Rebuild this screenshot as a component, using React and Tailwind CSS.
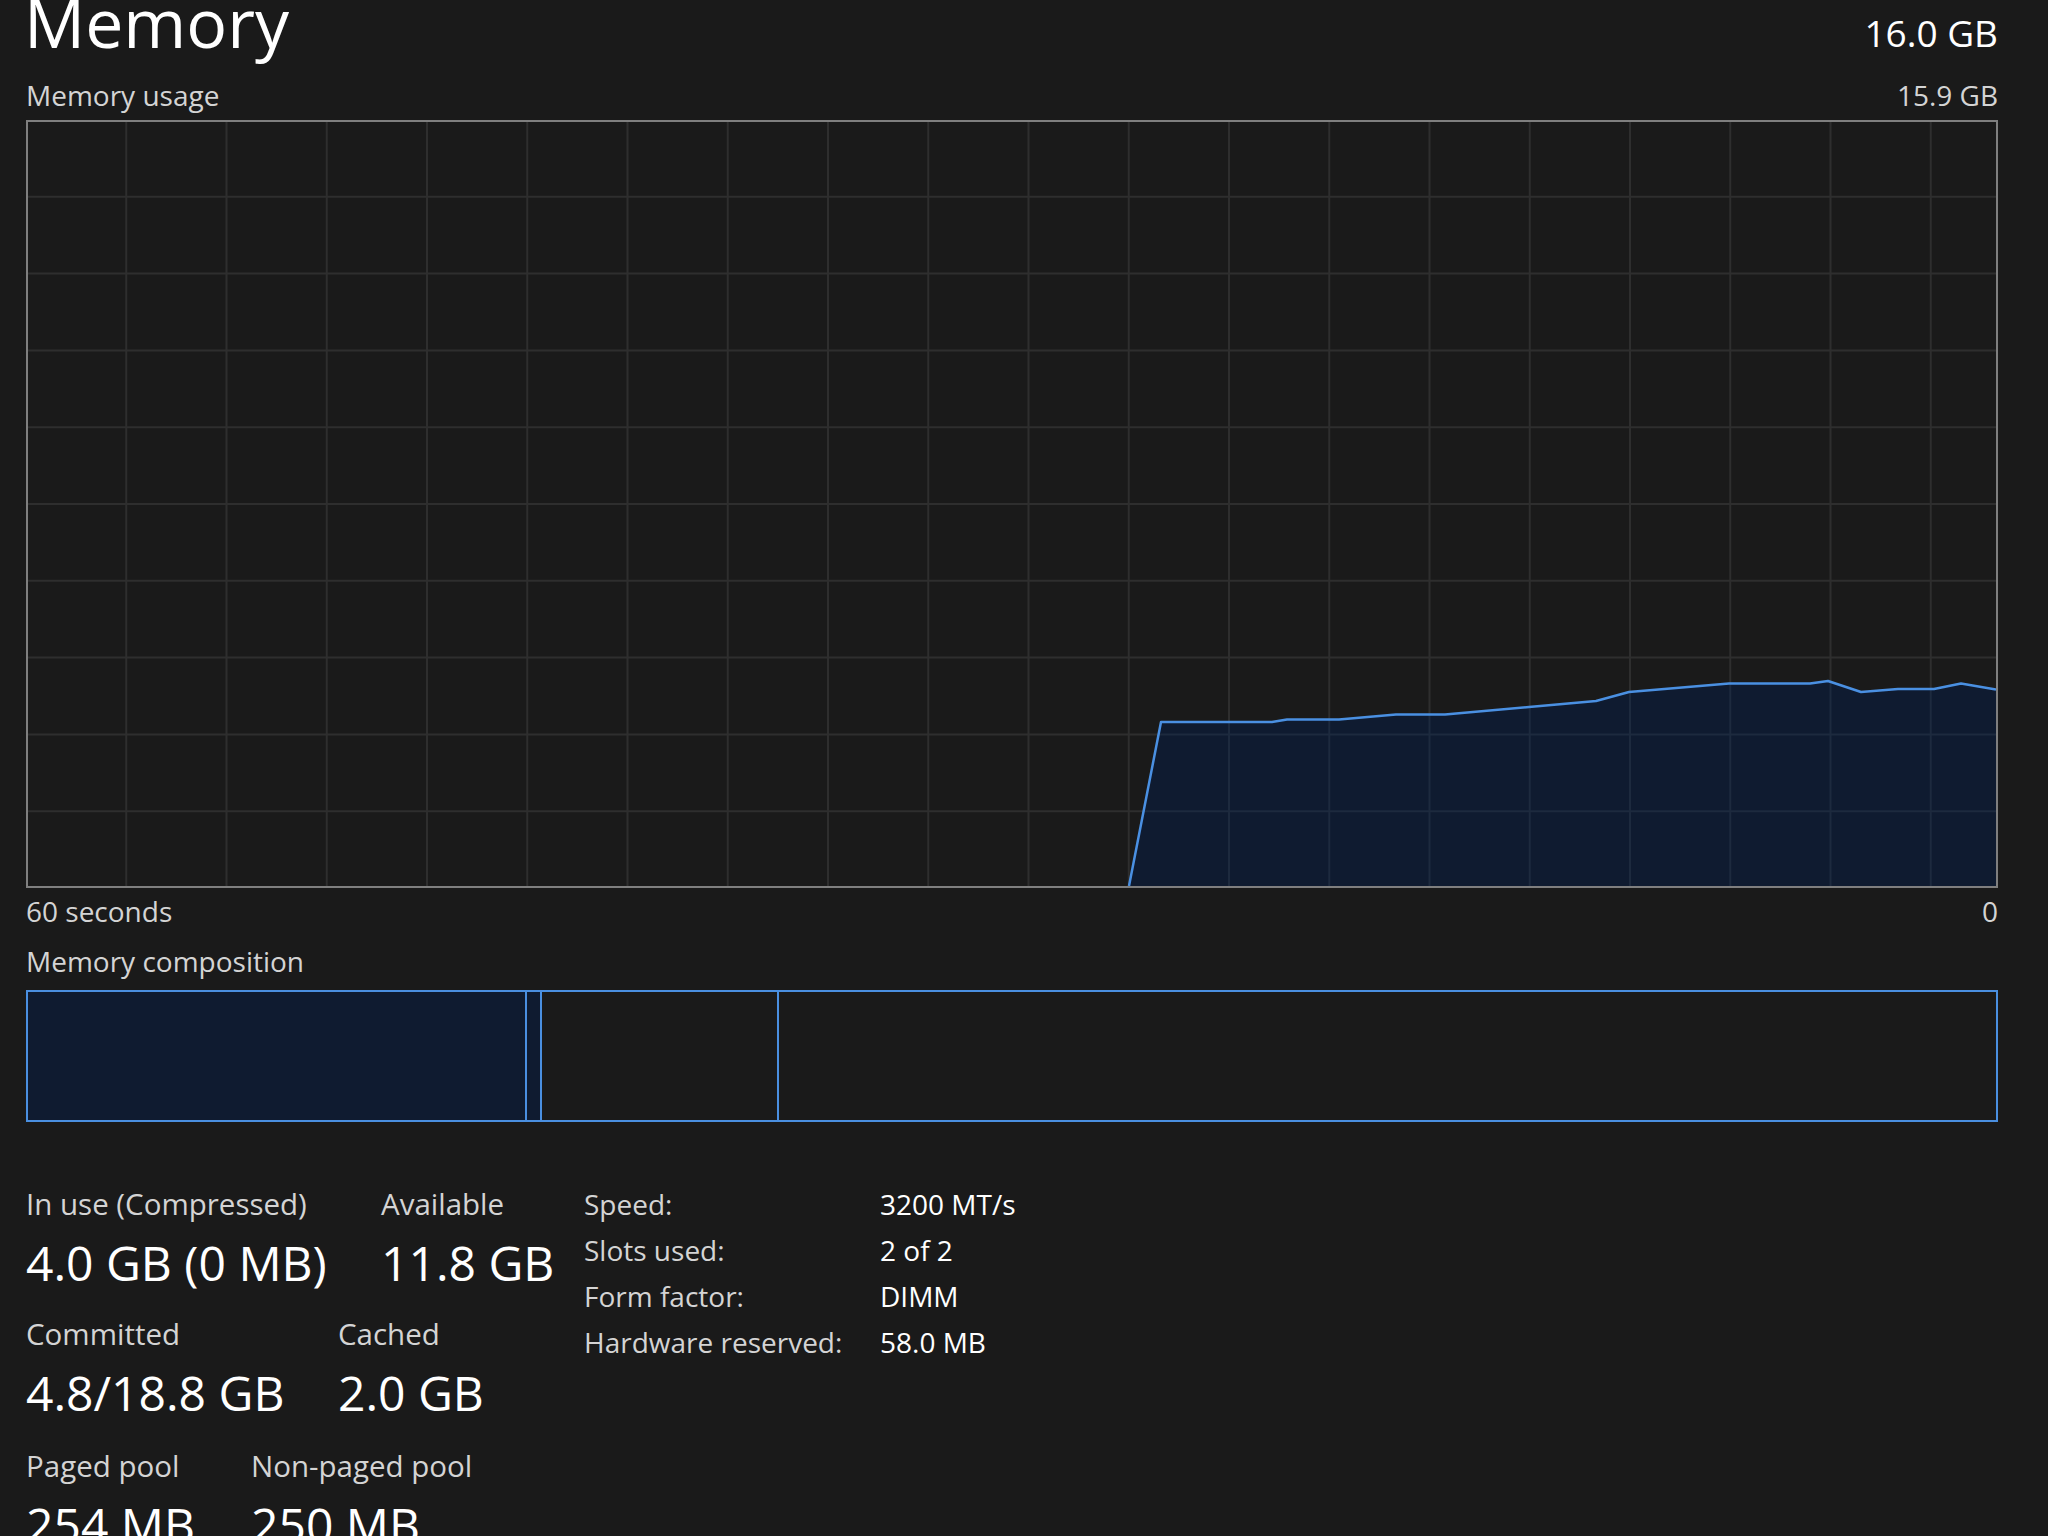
import React from "react";

const W = 1968;
const H = 764;
const pts = [
  [1101, 764], [1133, 600], [1244, 600], [1259, 597.5], [1311, 597.5],
  [1368, 592.5], [1417, 592.5], [1501, 585], [1568, 579], [1601, 570],
  [1701, 561.5], [1782, 561.5], [1800, 559], [1833, 570], [1870, 567],
  [1906, 567], [1933, 561.5], [1968, 567.5],
];

function Graph() {
  const vLines = [];
  for (let k = 1; k <= 19; k++) vLines.push(100.25 * k - 2);
  const hLines = [];
  for (let k = 1; k <= 9; k++) hLines.push(76.8 * k - 2);
  const line = pts.map((p) => p.join(",")).join(" ");
  const poly = line + ` ${W},${H} 1101,${H}`;
  const grid = (color) => (
    <g stroke={color} strokeWidth="2">
      {vLines.map((x) => (
        <line key={"v" + x} x1={x} y1={0} x2={x} y2={H} />
      ))}
      {hLines.map((y) => (
        <line key={"h" + y} x1={0} y1={y} x2={W} y2={y} />
      ))}
    </g>
  );
  return (
    <svg width={W} height={H} className="block">
      <defs>
        <clipPath id="fillclip">
          <polygon points={poly} />
        </clipPath>
      </defs>
      {grid("#2e2e2e")}
      <polygon points={poly} fill="#0f1b30" />
      <g clipPath="url(#fillclip)">{grid("#1d2a3e")}</g>
      <polyline points={line} fill="none" stroke="#4a90e2" strokeWidth="2.5" strokeLinejoin="round" />
    </svg>
  );
}

function Stat({ label, value }) {
  return (
    <div className="flex flex-col">
      <div className="text-[29.5px] leading-[28px] text-[#d4d4d4] whitespace-nowrap">{label}</div>
      <div className="mt-[21px] text-[48px] leading-[48px] text-white whitespace-nowrap">{value}</div>
    </div>
  );
}

export default function App() {
  return (
    <div className="w-[2048px] h-[1536px] overflow-hidden bg-[#1a1a1a] font-['Open_Sans',sans-serif] text-white pl-[26px] pr-[50px]">
      <div className="flex h-[43px] items-start justify-between">
        <div className="text-[68px] leading-[43px] text-white -ml-[2px]">Memory</div>
        <div className="text-[37px] leading-[66px] text-white">16.0 GB</div>
      </div>
      <div className="mt-[38px] flex justify-between text-[28px] leading-[28px] text-[#d4d4d4]">
        <span>Memory usage</span>
        <span>15.9 GB</span>
      </div>
      <div className="mt-[11px] h-[768px] border-2 border-[#7f7f7f]">
        <Graph />
      </div>
      <div className="mt-[9px] flex justify-between text-[28px] leading-[28px] text-[#d4d4d4]">
        <span>60 seconds</span>
        <span>0</span>
      </div>
      <div className="mt-[22px] text-[28px] leading-[28px] text-[#d4d4d4]">Memory composition</div>
      <div className="mt-[15px] flex h-[132px] border-2 border-[#4a8fe0]">
        <div className="w-[499px] border-r-2 border-[#4a8fe0] bg-[#0f1b30]" />
        <div className="w-[15px] border-r-2 border-[#4a8fe0] bg-[#0f1b30]" />
        <div className="w-[237px] border-r-2 border-[#4a8fe0]" />
        <div className="flex-1" />
      </div>
      <div className="mt-[59px] flex items-start">
        <div className="w-[558px] pt-[9px] flex flex-col">
          <div className="flex">
            <div className="w-[355px]"><Stat label="In use (Compressed)" value="4.0 GB (0 MB)" /></div>
            <Stat label="Available" value="11.8 GB" />
          </div>
          <div className="mt-[33px] flex">
            <div className="w-[312px]"><Stat label="Committed" value="4.8/18.8 GB" /></div>
            <Stat label="Cached" value="2.0 GB" />
          </div>
          <div className="mt-[35px] flex">
            <div className="w-[225px]"><Stat label="Paged pool" value="254 MB" /></div>
            <Stat label="Non-paged pool" value="250 MB" />
          </div>
        </div>
        <div className="grid grid-cols-[296px_auto] text-[28px] leading-[46px]">
          <div className="text-[#d4d4d4]">Speed:</div>
          <div className="text-white">3200 MT/s</div>
          <div className="text-[#d4d4d4]">Slots used:</div>
          <div className="text-white">2 of 2</div>
          <div className="text-[#d4d4d4]">Form factor:</div>
          <div className="text-white">DIMM</div>
          <div className="text-[#d4d4d4]">Hardware reserved:</div>
          <div className="text-white">58.0 MB</div>
        </div>
      </div>
    </div>
  );
}
